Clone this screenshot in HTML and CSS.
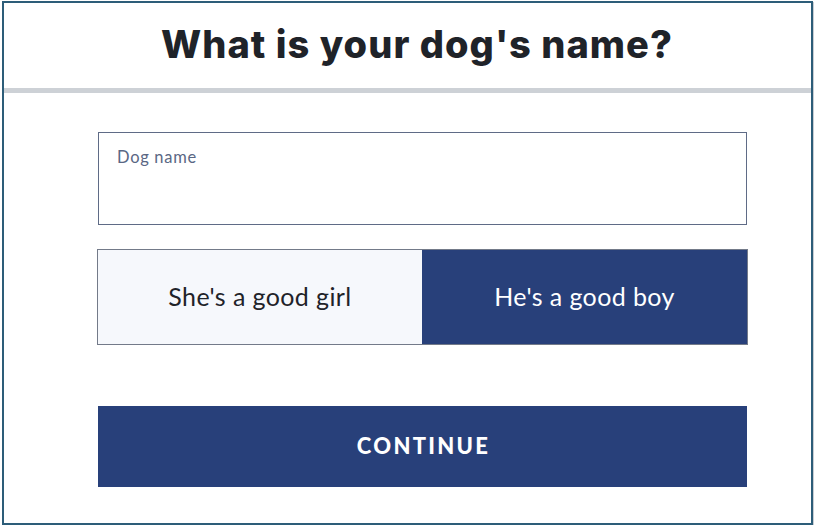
FILE: index.html
```html
<!DOCTYPE html>
<html lang="en">
<head>
<meta charset="utf-8">
<title>Dog name</title>
<link rel="stylesheet" href="styles.css">
</head>
<body>
<div class="frame">
  <header class="header">
    <h1 class="title">What is your dog's name?</h1>
  </header>
  <div class="divider"></div>
  <main class="content">
    <label class="field">
      <span class="field-label">Dog name</span>
      <input class="field-input" type="text">
    </label>
    <div class="toggle">
      <div class="toggle-opt">She's a good girl</div>
      <div class="toggle-opt toggle-opt--active">He's a good boy</div>
    </div>
    <button class="continue">CONTINUE</button>
  </main>
</div>
</body>
</html>
```
FILE: styles.css
```css
html, body {
  margin: 0;
  padding: 0;
  background: #ffffff;
}
.frame {
  box-sizing: border-box;
  margin: 1px 0 0 2px;
  width: 811px;
  height: 524px;
  border: 2px solid #2d5d79;
  box-shadow: 1px 1px 0 #c9ced3;
  background: #ffffff;
  display: flex;
  flex-direction: column;
}
.header {
  height: 85px;
  display: flex;
  align-items: center;
  justify-content: center;
  padding-left: 19px;
}
.title {
  margin: 0;
  font-family: Inter, "Liberation Sans", sans-serif;
  font-weight: 800;
  font-size: 38px;
  letter-spacing: 1.05px;
  color: #1f2329;
  position: relative;
  top: -2px;
}
.divider {
  height: 5px;
  background: #cdd1d6;
}
.content {
  padding: 39px 0 0 94px;
  display: flex;
  flex-direction: column;
  width: 651px;
}
.field {
  box-sizing: border-box;
  width: 649px;
  height: 93px;
  border: 1px solid #5f6b86;
  display: flex;
  flex-direction: column;
  padding: 14px 18px 0;
  background: #fff;
}
.field-label {
  font-family: Lato, "Open Sans", sans-serif;
  font-size: 16.5px;
  letter-spacing: 0.7px;
  color: #5a6784;
}
.field-input {
  border: none;
  outline: none;
  background: transparent;
  font-family: Lato, sans-serif;
  font-size: 18px;
  padding: 0;
  margin-top: 6px;
}
.toggle {
  box-sizing: border-box;
  margin: 24px 0 0 -1px;
  width: 651px;
  height: 96px;
  border: 1px solid #737a89;
  display: grid;
  grid-template-columns: 324px 1fr;
}
.toggle-opt {
  display: flex;
  align-items: center;
  justify-content: center;
  font-family: Lato, "Open Sans", sans-serif;
  font-size: 25px;
  letter-spacing: 0.4px;
  color: #1f2329;
  background: #f6f8fc;
  padding-bottom: 2px;
}
.toggle-opt--active {
  background: #28407a;
  color: #ffffff;
}
.continue {
  margin-top: 61px;
  width: 649px;
  height: 81px;
  border: none;
  background: #28407a;
  color: #ffffff;
  font-family: Lato, "Liberation Sans", sans-serif;
  font-weight: 900;
  font-size: 22px;
  letter-spacing: 2.3px;
  padding: 0 0 2px 2px;
}
```
